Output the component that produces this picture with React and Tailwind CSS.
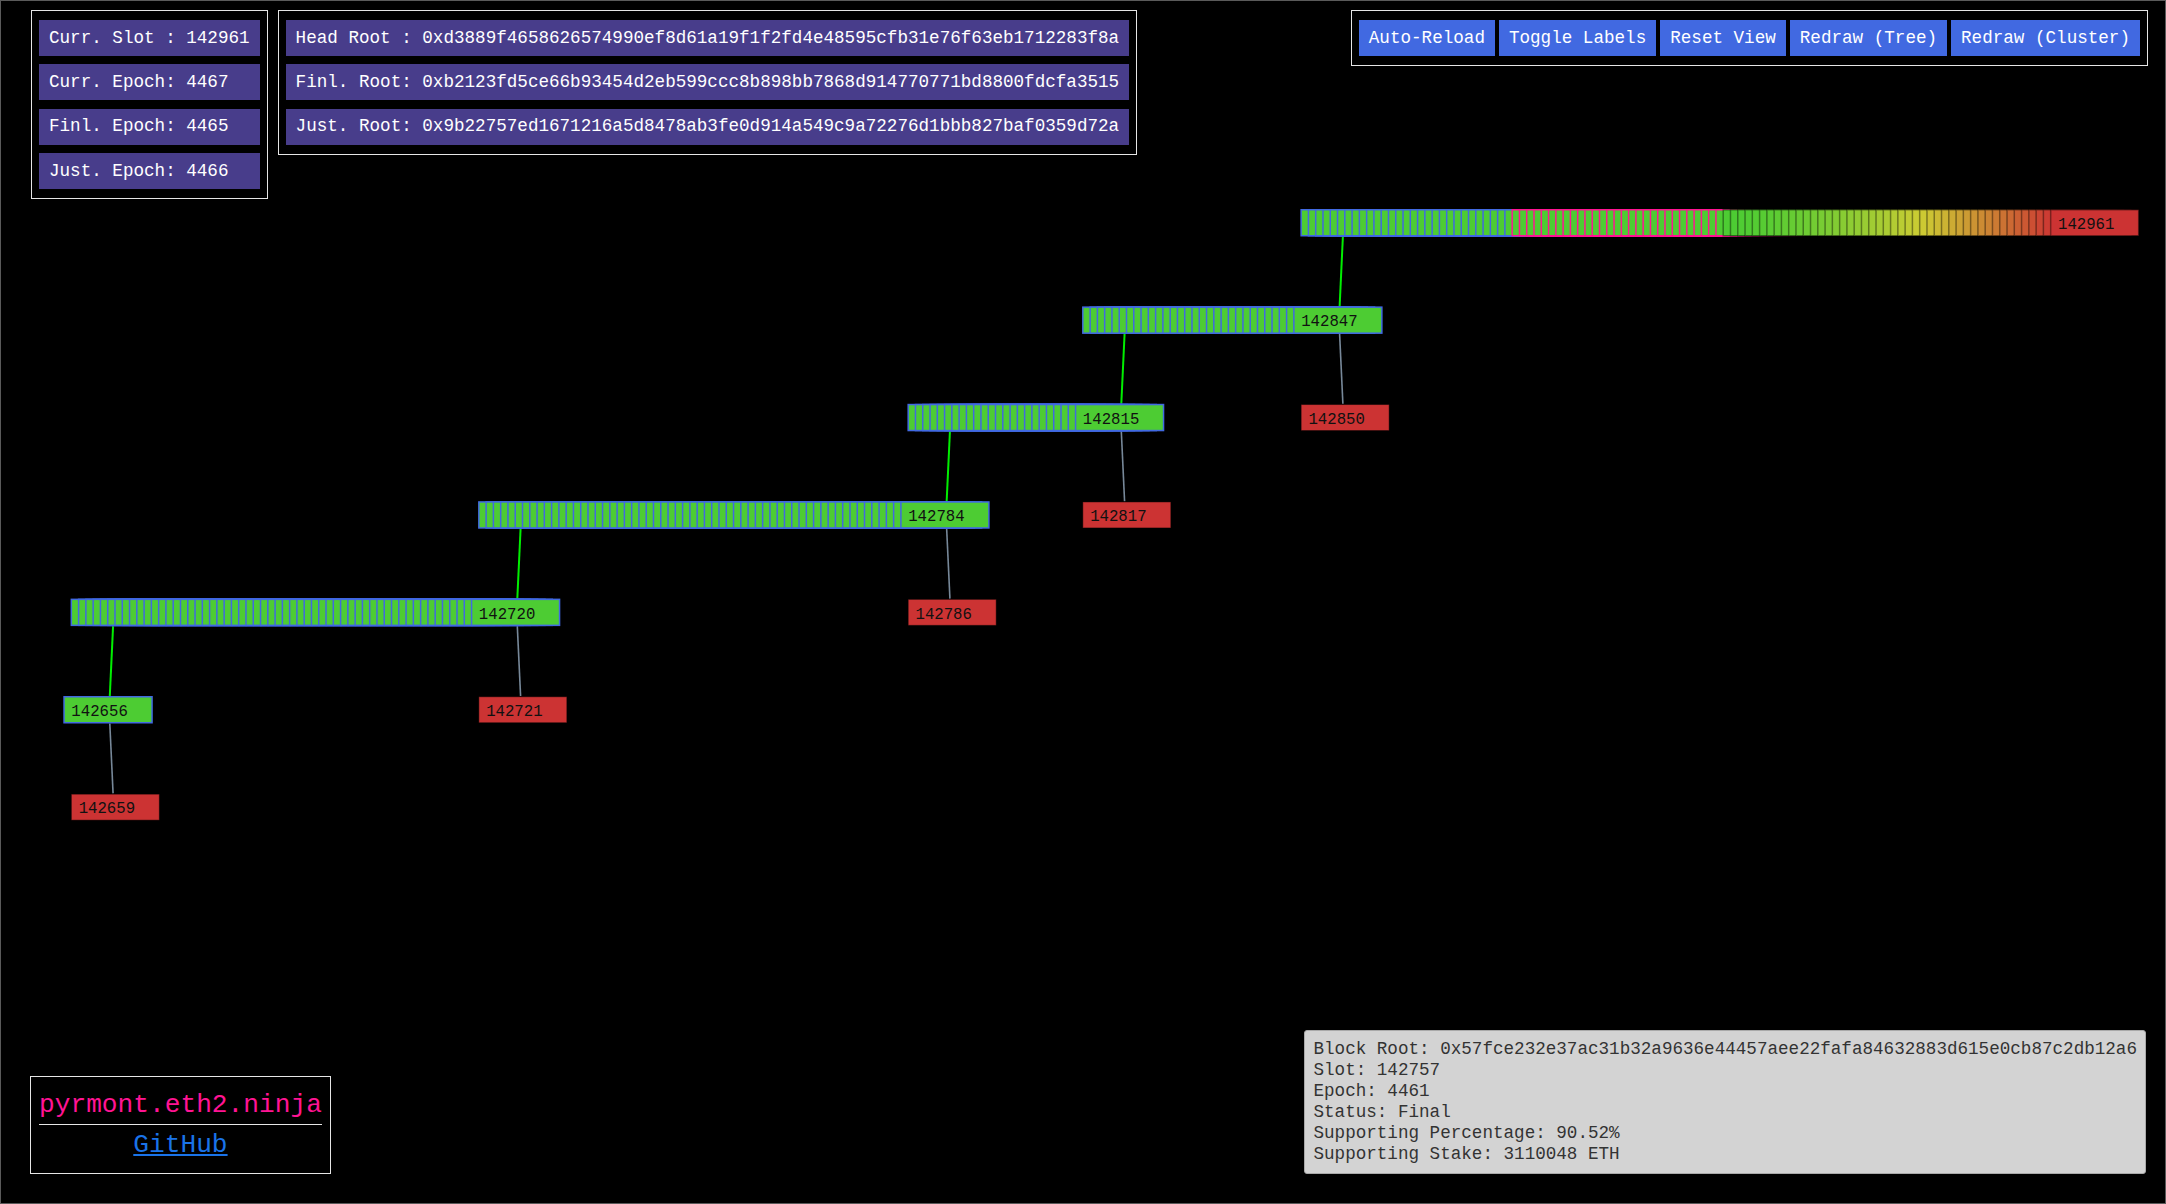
import React from "react";

const P = 7.277;
const X0 = 63.3;
const L0 = 209;
const LS = 97.4;
const W = 88;
const H = 26;
const rx = (i) => X0 + 0.75 + i * P;
const ry = (k) => L0 + 0.75 + k * LS;
const ox = (i) => X0 + i * P;
const top = (k) => L0 + k * LS;
const bottom = (k) => L0 + k * LS + 27.5;

const GREEN = "#4dcc33";
const RED = "#cc3333";
const BLUE = "#4169e1";
const PINK = "#ff1493";

function hsl(h, s, l) {
  s /= 100;
  l /= 100;
  const k = (n) => (n + h / 30) % 12;
  const a = s * Math.min(l, 1 - l);
  const f = (n) => l - a * Math.max(-1, Math.min(k(n) - 3, Math.min(9 - k(n), 1)));
  const to = (x) => Math.round(x * 255).toString(16).padStart(2, "0");
  return "#" + to(f(0)) + to(f(8)) + to(f(4));
}

function Node({ i, k, fill, stroke, sw = 1.5, label, so = 1 }) {
  return (
    <g>
      <rect x={rx(i)} y={ry(k)} width={W} height={H} fill={fill} stroke={stroke} strokeWidth={sw} strokeOpacity={so} />
      {label && (
        <text x={rx(i) + 7.3} y={ry(k) + 19.2} fontSize="15.7" fontFamily="'Liberation Mono', monospace" fill="#111">
          {label}
        </text>
      )}
    </g>
  );
}

function Chain({ start, count, k, label }) {
  const out = [];
  for (let j = 0; j < count; j++) {
    out.push(<Node key={j} i={start + j} k={k} fill={GREEN} stroke={BLUE} />);
  }
  out.push(<Node key="l" i={start + count} k={k} fill={GREEN} stroke={BLUE} label={label} />);
  return <g>{out}</g>;
}

function HeadChain() {
  const out = [];
  const s = 170;
  for (let j = 0; j < 29; j++) out.push(<Node key={"b" + j} i={s + j} k={0} fill={GREEN} stroke={BLUE} />);
  for (let j = 0; j < 29; j++) out.push(<Node key={"p" + j} i={s + 29 + j} k={0} fill={GREEN} stroke={PINK} />);
  for (let j = 0; j < 45; j++) {
    const t = j / 45;
    const h = 110 * (1 - Math.pow(t, 1.5));
    out.push(<Node key={"g" + j} i={s + 58 + j} k={0} fill={hsl(h, 60, 50)} stroke="#000" so={0.4} />);
  }
  out.push(<Node key="h" i={s + 103} k={0} fill={RED} stroke="#000" so={0.4} label="142961" />);
  return <g>{out}</g>;
}

function Link({ ip, kp, up, color, w }) {
  const x1 = ox(ip) + 46.5;
  const x2 = ox(ip + 1) + 42.5;
  const y1 = up ? top(kp) : bottom(kp);
  const y2 = up ? bottom(kp - 1) : top(kp + 1);
  return <line x1={x1} y1={y1} x2={x2} y2={y2} stroke={color} strokeWidth={w} />;
}

function Graph() {
  const forks = [
    [0, 5],
    [56, 4],
    [115, 3],
    [139, 2],
    [169, 1],
  ];
  return (
    <svg className="absolute left-[-1px] top-[-1px]" width="2166" height="1204">
      {forks.map(([i, k]) => (
        <Link key={"g" + i} ip={i} kp={k} up color="#00ee00" w={2} />
      ))}
      {forks.map(([i, k]) => (
        <Link key={"s" + i} ip={i} kp={k} up={false} color="#778899" w={1.6} />
      ))}
      <Node i={0} k={5} fill={GREEN} stroke={BLUE} label="142656" />
      <Node i={1} k={6} fill={RED} stroke="#000" sw={1} so={0.45} label="142659" />
      <Chain start={1} count={55} k={4} label="142720" />
      <Node i={57} k={5} fill={RED} stroke="#000" sw={1} so={0.45} label="142721" />
      <Chain start={57} count={58} k={3} label="142784" />
      <Node i={116} k={4} fill={RED} stroke="#000" sw={1} so={0.45} label="142786" />
      <Chain start={116} count={23} k={2} label="142815" />
      <Node i={140} k={3} fill={RED} stroke="#000" sw={1} so={0.45} label="142817" />
      <Chain start={140} count={29} k={1} label="142847" />
      <Node i={170} k={2} fill={RED} stroke="#000" sw={1} so={0.45} label="142850" />
      <HeadChain />
    </svg>
  );
}

function Item({ children }) {
  return (
    <div className="bg-[#483d8b] text-white h-[36px] flex items-center px-[10px] whitespace-pre">{children}</div>
  );
}

export default function App() {
  return (
    <div className="relative w-[2166px] h-[1204px] bg-black overflow-hidden border border-[#5a5a5a] font-['Liberation_Mono',monospace] text-[17.6px]">
      <Graph />
      <div className="relative flex flex-col justify-between h-full pt-[9px] pb-[29px] pl-[30px] pr-[17px]">
        <div className="flex items-start justify-between">
          <div className="flex items-start gap-[10px]">
            <div className="border border-[#e6e6e6] px-[7px] py-[9px] flex flex-col gap-[8.33px]">
              <Item>Curr. Slot : 142961</Item>
              <Item>Curr. Epoch: 4467</Item>
              <Item>Finl. Epoch: 4465</Item>
              <Item>Just. Epoch: 4466</Item>
            </div>
            <div className="border border-[#e6e6e6] px-[7px] py-[9px] flex flex-col gap-[8.33px]">
              <Item>Head Root : 0xd3889f4658626574990ef8d61a19f1f2fd4e48595cfb31e76f63eb1712283f8a</Item>
              <Item>Finl. Root: 0xb2123fd5ce66b93454d2eb599ccc8b898bb7868d914770771bd8800fdcfa3515</Item>
              <Item>Just. Root: 0x9b22757ed1671216a5d8478ab3fe0d914a549c9a72276d1bbb827baf0359d72a</Item>
            </div>
          </div>
          <div className="border border-[#e6e6e6] px-[7px] py-[9px] flex gap-1">
            {["Auto-Reload", "Toggle Labels", "Reset View", "Redraw (Tree)", "Redraw (Cluster)"].map((b) => (
              <div key={b} className="bg-[#4169e1] text-white h-[36px] flex items-center px-[10px] whitespace-pre">
                {b}
              </div>
            ))}
          </div>
        </div>
        <div className="flex items-end justify-between">
          <div className="border border-[#e6e6e6] px-[8px] pt-[9px] pb-[7px] text-center ml-[-1px] text-[26.2px]">
            <div className="text-[#ff1493] leading-[38px]">pyrmont.eth2.ninja</div>
            <div className="h-px bg-[#e6e6e6]" />
            <div className="leading-[40.7px]">
              <a href="#" className="text-[#1a73e8] underline">GitHub</a>
            </div>
          </div>
          <div className="bg-[#d3d3d3] border border-[#a9a9a9] rounded-[3px] p-2 leading-[21px] text-[#333] mr-[2px] whitespace-pre">
            <div>Block Root: 0x57fce232e37ac31b32a9636e44457aee22fafa84632883d615e0cb87c2db12a6</div>
            <div>Slot: 142757</div>
            <div>Epoch: 4461</div>
            <div>Status: Final</div>
            <div>Supporting Percentage: 90.52%</div>
            <div>Supporting Stake: 3110048 ETH</div>
          </div>
        </div>
      </div>
    </div>
  );
}
